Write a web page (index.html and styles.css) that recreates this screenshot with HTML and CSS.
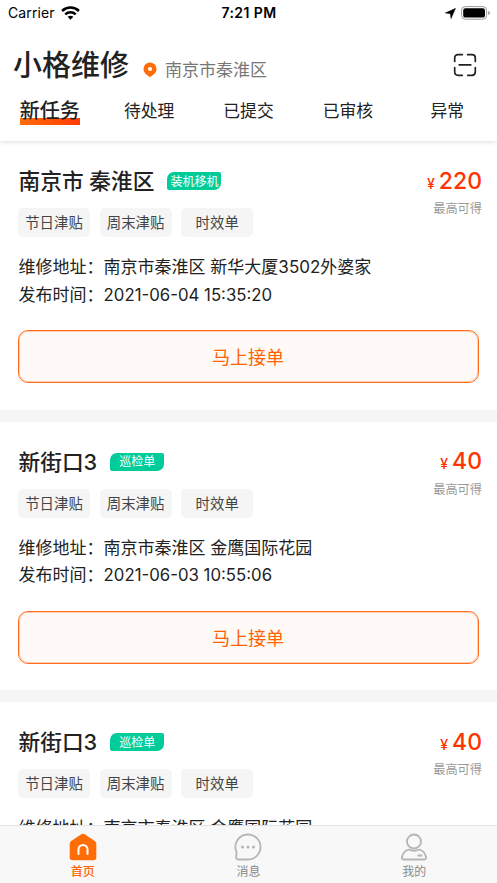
FILE: index.html
```html
<!DOCTYPE html>
<html lang="zh-CN">
<head>
<meta charset="utf-8">
<title>小格维修</title>
<link rel="stylesheet" href="styles.css">
</head>
<body>
<div class="app">
  <header class="header">
    <div class="status">
      <div class="status-left"><span>Carrier</span>
        <svg width="19" height="14" viewBox="0 0 18 13" fill="none" stroke="#000" stroke-width="2.4"><path d="M1 4.6C5.5.3 12.500.3 17 4.6M4 7.800C6.800 5.100 11.200 5.100 14 7.800"/><path d="M6.300 10.100Q9 7.900 11.700 10.100L9 12.800Z" fill="#000" stroke="none"/></svg>
      </div>
      <div class="status-time">7:21 PM</div>
      <div class="status-right">
        <svg width="11" height="11" viewBox="0 0 11 11"><path d="M10.600.3 6 10.700 5.300 5.700.2 5Z" stroke="#000" stroke-width=".4" stroke-linejoin="round"/></svg>
        <svg width="30" height="14" viewBox="0 0 30 14"><rect x=".6" y=".6" width="25" height="12.600" rx="3.700" fill="none" stroke="#999"/><rect x="2.200" y="2.200" width="21.800" height="9.400" rx="2.200"/><path d="M27.300 4.700q1.500.7 1.500 2.300t-1.500 2.300z" fill="#888"/></svg>
      </div>
    </div>
    <div class="brand">
      <h1>小格维修</h1>
      <svg class="pin" width="14" height="16" viewBox="0 0 14 16"><path fill-rule="evenodd" fill="#ff6d06" d="M7 .4A6.500 6.500 0 0 1 13.500 6.900C13.500 9.200 12.300 11 10.900 12.200L7.600 14.800Q7 15.200 6.400 14.800L3.100 12.200C1.700 11 .5 9.200.5 6.900A6.500 6.500 0 0 1 7 .4ZM7 4.900A2.100 2.100 0 1 0 7 9.100 2.100 2.100 0 0 0 7 4.900Z"/></svg>
      <span class="city">南京市秦淮区</span>
      <svg class="scan" width="24" height="24" viewBox="0 0 24 24" fill="none" stroke="#222" stroke-width="1.700" stroke-linecap="round"><path d="M1.700 8.500V5Q1.700 1.700 5 1.700H9.300M14.700 1.700H19Q22.300 1.700 22.300 5V8.500M22.300 14.500V19Q22.300 22.300 19 22.300H14.700M9.300 22.300H5Q1.700 22.300 1.700 19V14.500M6.200 11.800H17.800"/></svg>
    </div>
    <nav class="tabs">
      <a class="active"><span>新任务</span></a><a>待处理</a><a>已提交</a><a>已审核</a><a>异常</a>
    </nav>
  </header>
  <main class="list">
    <article class="card">
      <div class="top"><h2>南京市 秦淮区</h2><span class="badge">装机移机</span><div class="price"><small>¥</small>220</div></div>
      <div class="tags"><span>节日津贴</span><span>周末津贴</span><span>时效单</span><em>最高可得</em></div>
      <div class="info"><p>维修地址：<span>南京市秦淮区 新华大厦3502外婆家</span></p><p>发布时间：<span class="date">2021-06-04 15:35:20</span></p></div>
      <button>马上接单</button>
    </article>
    <article class="card">
      <div class="top"><h2>新街口3</h2><span class="badge">巡检单</span><div class="price"><small>¥</small>40</div></div>
      <div class="tags"><span>节日津贴</span><span>周末津贴</span><span>时效单</span><em>最高可得</em></div>
      <div class="info"><p>维修地址：<span>南京市秦淮区 金鹰国际花园</span></p><p>发布时间：<span class="date">2021-06-03 10:55:06</span></p></div>
      <button>马上接单</button>
    </article>
    <article class="card">
      <div class="top"><h2>新街口3</h2><span class="badge">巡检单</span><div class="price"><small>¥</small>40</div></div>
      <div class="tags"><span>节日津贴</span><span>周末津贴</span><span>时效单</span><em>最高可得</em></div>
      <div class="info"><p>维修地址：<span>南京市秦淮区 金鹰国际花园</span></p></div>
    </article>
  </main>
  <nav class="bottom">
    <a class="on"><svg width="28" height="28" viewBox="0 0 28 28"><path fill="#ff6d06" d="M12.300 1.300Q14 .2 15.700 1.300L25.800 8Q27.300 9 27.300 10.800V24.200Q27.300 27.200 24.300 27.200H3.700Q.7 27.200.7 24.200V10.800Q.7 9 2.200 8Z"/><path d="M9.500 21V16.500A4.500 4.500 0 0 1 18.500 16.500V21" fill="none" stroke="#fff" stroke-width="2" stroke-linecap="round"/></svg><span>首页</span></a>
    <a><svg width="28" height="28" viewBox="0 0 28 28"><path d="M14 1.500A12.500 12.500 0 1 1 14 26.500H4Q2 26.500 2.200 24.500L2.600 19.300A12.500 12.500 0 0 1 14 1.500Z" fill="none" stroke="#b5b5b5" stroke-width="1.800"/><g fill="#b5b5b5"><circle cx="8.500" cy="14" r="1.500"/><circle cx="14" cy="14" r="1.500"/><circle cx="19.500" cy="14" r="1.500"/></g></svg><span>消息</span></a>
    <a><svg width="28" height="28" viewBox="0 0 28 28" fill="none" stroke="#b5b5b5" stroke-width="1.800" stroke-linecap="round"><circle cx="14" cy="8.500" r="7"/><path d="M8.500 16.500C5 17.800 2.700 20.700 2 24Q1.600 26.500 4 26.500H24Q26.400 26.500 26 24C25.300 20.700 23 17.800 19.500 16.500Q14 19 8.500 16.500ZM18.200 22.500H21.700"/></svg><span>我的</span></a>
  </nav>
</div>
</body>
</html>
```
FILE: styles.css
```css
* { box-sizing: border-box; }
body, h1, h2, p { margin: 0; }
body { font-family: Inter, "Noto Sans CJK SC", sans-serif; color: #222; background: #fff; overflow: hidden; }
.app { height: 883px; display: flex; flex-direction: column; overflow: hidden; }
.header { flex: none; height: 141px; background: #fff; box-shadow: 0 1px 5px rgba(0,0,0,.13); z-index: 1; }
.status { height: 26px; padding: 0 7px 0 8px; display: grid; grid-template-columns: 1fr auto 1fr; align-items: center; color: #000; font-size: 14px; line-height: 26px; }
.status-left, .status-right { display: flex; align-items: center; gap: 6px; }
.status-left span { letter-spacing: .1px; }
.status-right { justify-content: flex-end; gap: 5px; margin-right: -1px; }
.status-time { font-weight: 600; letter-spacing: .4px; }
.brand { height: 78px; padding: 2px 20px 0 13px; display: flex; align-items: center; }
h1 { font-size: 29px; line-height: 40px; font-weight: 500; }
.pin { margin: 8px 0 0 14px; }
.city { font-size: 17px; line-height: 24px; color: #777; margin: 8px 0 0 8px; }
.scan { margin: -2px 0 0 auto; }
.tabs { height: 37px; display: grid; grid-template-columns: repeat(5, 1fr); margin-top: -10px; }
.tabs a { text-align: center; font-size: 16.8px; line-height: 34px; }
.tabs .active { font-size: 20px; font-weight: 500; }
.active span { display: inline-block; line-height: 30px; height: 30px; background: linear-gradient(90deg, #ff6d06, #ff3b06) 0 22px / 100% 7px no-repeat; }
.list { flex: 1; min-height: 0; overflow: hidden; background: #f6f6f6; }
.card { height: 268.6px; margin-bottom: 12px; padding: 24px 18px 0; background: #fff; }
.top { height: 32px; display: flex; align-items: center; margin-right: -3px; }
h2 { font-size: 21.7px; line-height: 32px; font-weight: 500; white-space: nowrap; padding-left: .5px; }
.badge { width: 54px; height: 18px; line-height: 18px; margin-left: 13px; border-radius: 7px 2px 7px 2px; background: #0c9; color: #fff; font-size: 12px; text-align: center; white-space: nowrap; }
.badge { padding-top: .6px; }
.price { margin-left: auto; color: #ff3300; font-size: 23px; font-weight: 500; line-height: 32px; padding-top: 2px; }
.price small { font-size: 14px; margin-right: 4px; }
.tags { display: flex; gap: 9.600px; margin: 11px -3px 0 0; height: 29px; }
.tags span { width: 72px; height: 29px; border-radius: 5px; background: #f5f5f5; color: #444; font-size: 14.400px; line-height: 29.500px; text-align: center; }
.tags em { margin: -8px 0 0 auto; font-style: normal; font-size: 12.200px; line-height: 18px; color: #999; }
.info { margin: 16px 0 0 .6px; }
.info p { font-size: 17px; line-height: 28px; height: 27.700px; white-space: nowrap; }
.date { font-size: 16.800px; }
button { display: block; width: 461px; height: 53px; margin-top: 21.600px; padding: 0 1px 1px 0; border: 1px solid #ff6d1c; box-shadow: inset 0 0 0 1px rgba(255,109,28,.3); border-radius: 10px; background: #fffaf7; color: #ff6200; font: 18px Inter, "Noto Sans CJK SC", sans-serif; }
.bottom { flex: none; height: 58px; display: grid; grid-template-columns: repeat(3, 1fr); background: #f8f8f8; border-top: 1px solid #e2e2e2; z-index: 1; }
.bottom a { display: flex; flex-direction: column; align-items: center; padding-top: 7px; font-size: 12px; line-height: 18px; color: #888; }
.bottom span { margin-top: 2px; }
.bottom .on { color: #ff6200; font-weight: 500; }
```
